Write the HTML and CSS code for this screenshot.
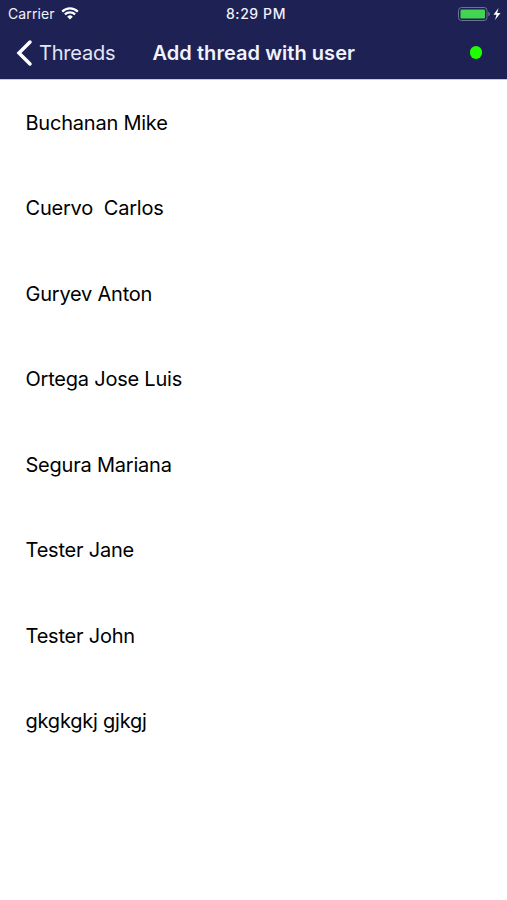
FILE: index.html
```html
<!DOCTYPE html>
<html lang="en">
<head>
  <meta charset="UTF-8">
  <meta name="viewport" content="width=device-width, initial-scale=1.0">
  <title>Add thread with user</title>
  <link rel="stylesheet" href="styles.css">
</head>
<body>
  <header>
    <div class="status-bar">
      <div class="carrier">
        <span>Carrier</span>
        <svg width="18" height="13" viewBox="0 0 18 13">
          <path d="M1.2 4.6a11 11 0 0 1 15.6 0M3.9 7.4a7.2 7.2 0 0 1 10.200 0" fill="none" stroke="#fff" stroke-width="2.2"/>
          <path d="M9 12.500L6.200 9.700a4 4 0 0 1 5.600 0z" fill="#fff"/>
        </svg>
      </div>
      <span class="time">8:29 PM</span>
      <div class="power">
        <svg width="44" height="14" viewBox="0 0 44 14">
          <rect x="0.5" y="0.5" width="28.5" height="13" rx="3" fill="none" stroke="#6f7297"/>
          <rect x="2.5" y="2.5" width="24.5" height="9" rx="1.2" fill="#43d551"/>
          <path d="M30.3 4.8a2.3 2.3 0 0 1 0 4.4z" fill="#6f7297"/>
          <path d="M40.5 1L35.5 7.8h3L37 13l5.5-7h-3.3z" fill="#fff"/>
        </svg>
      </div>
    </div>
    <div class="nav-bar">
      <a class="back" href="#">
        <svg width="17" height="28" viewBox="0 0 17 28">
          <path d="M14 3L3 14l11 11" fill="none" stroke="#fff" stroke-width="3.5" stroke-linecap="round"/>
        </svg>
        <span>Threads</span>
      </a>
      <h1>Add thread with user</h1>
      <span class="online"></span>
    </div>
  </header>
  <ul class="users">
    <li>Buchanan Mike</li>
    <li>Cuervo&nbsp; Carlos</li>
    <li>Guryev Anton</li>
    <li>Ortega Jose Luis</li>
    <li>Segura Mariana</li>
    <li>Tester Jane</li>
    <li>Tester John</li>
    <li>gkgkgkj gjkgj</li>
  </ul>
</body>
</html>
```

FILE: styles.css
```css
body {
  margin: 0;
  font-family: Inter, sans-serif;
  background-color: #fff;
  color: #000;
}
header {
  height: 79px;
  border-bottom: 1px solid #c9cada;
  background-color: #1d2154;
  color: #f1f2fa;
}
.status-bar {
  display: grid;
  grid-template-columns: 1fr auto 1fr;
  align-items: center;
  height: 27px;
  padding: 0 5px 0 8px;
  font-size: 14px;
}
.carrier {
  display: flex;
  align-items: center;
  gap: 6px;
  letter-spacing: 0.1px;
}
.time {
  padding-left: 2px;
  font-weight: 500;
  letter-spacing: 0.6px;
}
.power {
  display: flex;
  justify-content: flex-end;
}
.nav-bar {
  display: flex;
  align-items: center;
  height: 51px;
  padding: 0 25px 0 16px;
}
.back {
  display: flex;
  align-items: center;
  gap: 6px;
  width: 136.5px;
  color: #e4e6f4;
  font-size: 20px;
  letter-spacing: -0.2px;
  text-decoration: none;
}
h1 {
  flex: 1;
  margin: 0;
  font-size: 20px;
  font-weight: 600;
  letter-spacing: 0.05px;
  white-space: nowrap;
}
.online {
  width: 12.5px;
  height: 12.5px;
  border-radius: 50%;
  background-color: #1fff00;
}
.users {
  margin: 0;
  padding: 0;
  list-style: none;
}
.users li {
  display: flex;
  align-items: center;
  height: 85.5px;
  padding-left: 25.5px;
  font-size: 20px;
  letter-spacing: -0.22px;
}
```
